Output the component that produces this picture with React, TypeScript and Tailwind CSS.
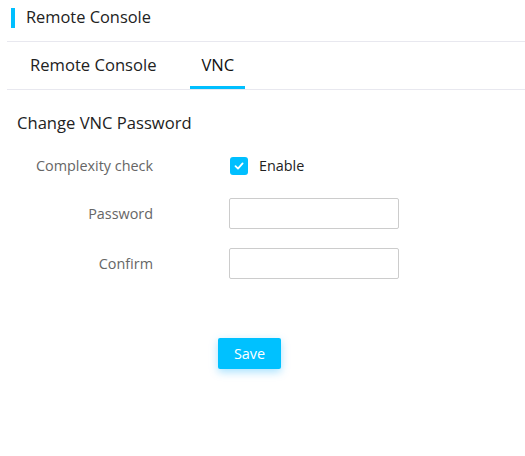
import { useState } from "react";

const font = { fontFamily: '"Open Sans", "Noto Sans", sans-serif' };

function Row({
  label,
  className,
  children,
}: {
  label: string;
  className: string;
  children: React.ReactNode;
}) {
  return (
    <div className={`flex items-center ${className}`}>
      <div className="w-[146px] text-right text-[14.4px] text-[#666]">{label}</div>
      <div className="ml-[76px] flex items-center">{children}</div>
    </div>
  );
}

export default function App() {
  const [enabled, setEnabled] = useState(true);
  const [tab, setTab] = useState("vnc");

  return (
    <div className="h-[456px] w-[525px] bg-white pl-[7px] text-[#222]" style={font}>
      <div className="flex h-[42px] items-center border-b border-[#e8e8ef] pb-[6px]">
        <span className="ml-[4px] h-[20px] w-[4px] bg-[#00bfff]" />
        <span className="ml-[11px] text-[16.4px]">Remote Console</span>
      </div>

      <div className="flex h-[48px] items-stretch gap-[23px] border-b border-[#e8e8ef] pl-[12px]">
        {[
          { id: "rc", label: "Remote Console" },
          { id: "vnc", label: "VNC" },
        ].map((t) => (
          <button
            key={t.id}
            onClick={() => setTab(t.id)}
            className={`relative px-[11px] text-[16.6px] ${
              tab === t.id ? "text-[#111]" : "text-[#222]"
            }`}
          >
            {t.label}
            {tab === t.id && (
              <span className="absolute bottom-0 left-0 h-[3px] w-full bg-[#00bfff]" />
            )}
          </button>
        ))}
      </div>

      <div className="ml-[10px] mt-[21px] text-[16.6px]">Change VNC Password</div>

      <div className="mt-[14px] flex flex-col">
        <Row label="Complexity check" className="h-[32px]">
          <button
            onClick={() => setEnabled(!enabled)}
            className={`ml-[1px] flex h-[18px] w-[18px] items-center justify-center rounded-[3px] ${
              enabled ? "bg-[#00bfff]" : "border border-[#ccc] bg-white"
            }`}
          >
            {enabled && (
              <svg width="12" height="12" viewBox="0 0 12 12" fill="none">
                <path d="M2.5 6.2 L5 8.6 L9.6 3.4" stroke="white" strokeWidth="1.8" strokeLinecap="round" strokeLinejoin="round" />
              </svg>
            )}
          </button>
          <span className="ml-[11px] text-[14.4px] text-[#222]">Enable</span>
        </Row>
        <Row label="Password" className="mt-[16px] h-[31px]">
          <input type="password" className="h-[31px] w-[170px] rounded-[2px] border border-[#ccc] px-2 text-[14px] outline-none" />
        </Row>
        <Row label="Confirm" className="mt-[19px] h-[31px]">
          <input type="password" className="h-[31px] w-[170px] rounded-[2px] border border-[#ccc] px-2 text-[14px] outline-none" />
        </Row>
      </div>

      <button className="ml-[211px] mt-[59px] h-[31px] w-[63px] rounded-[2px] bg-[#00c1ff] text-[14.4px] text-white shadow-[0_3px_8px_rgba(0,170,255,0.35)]">
        Save
      </button>
    </div>
  );
}
